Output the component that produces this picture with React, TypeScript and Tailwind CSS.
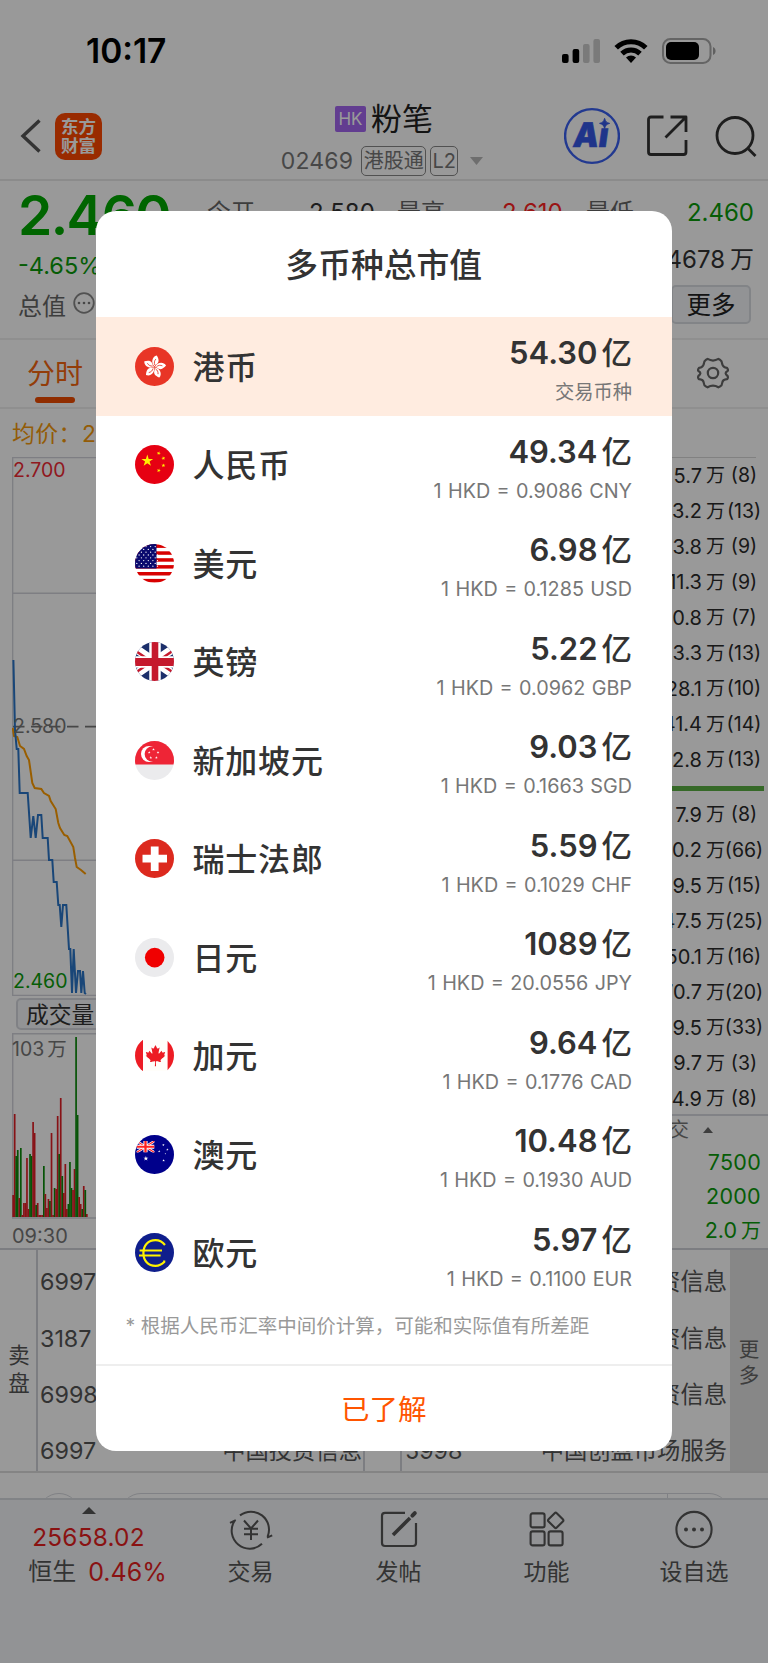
import type { ReactNode } from "react";
import { FaCanadianMapleLeaf } from "react-icons/fa";

type Currency = {
  name: string;
  amount: string;
  note: string;
  flag: ReactNode;
  active?: boolean;
};

const STAR = "M0 -1 L0.2245 -0.309 L0.951 -0.309 L0.363 0.118 L0.588 0.809 L0 0.382 L-0.588 0.809 L-0.363 0.118 L-0.951 -0.309 L-0.2245 -0.309 Z";

function Star({ x, y, r, rotate = 0, fill }: { x: number; y: number; r: number; rotate?: number; fill: string }) {
  return <path d={STAR} fill={fill} transform={`translate(${x} ${y}) rotate(${rotate}) scale(${r})`} />;
}

function Flag({ children }: { children: ReactNode }) {
  return (
    <svg viewBox="0 0 39 39" className="size-[39px] shrink-0 rounded-full">
      {children}
    </svg>
  );
}

function HongKong() {
  return (
    <Flag>
      <rect width="39" height="39" fill="#e83526" />
      <g transform="translate(19.5 20)">
        {[14, 86, 158, 230, 302].map((a) => (
          <g key={a} transform={`rotate(${a})`}>
            <path d="M0 -0.5 C-4.8 -3 -4.8 -9.6 -0.6 -11.6 C1.2 -9.8 3.8 -7 2 -4 C1.2 -2.6 0 -2.4 0 -0.5 Z" fill="#fff" />
            <path d="M-0.2 -2 C-1.6 -4 -1.6 -6 -0.6 -8" stroke="#e83526" strokeWidth="0.8" fill="none" />
          </g>
        ))}
      </g>
    </Flag>
  );
}

function China() {
  return (
    <Flag>
      <rect width="39" height="39" fill="#e60012" />
      <Star x={12.3} y={15.8} r={6.2} fill="#fff100" />
      <Star x={23.7} y={8.2} r={2.1} rotate={20} fill="#fff100" />
      <Star x={28.4} y={13.2} r={2.1} rotate={-15} fill="#fff100" />
      <Star x={28.4} y={20.5} r={2.1} fill="#fff100" />
      <Star x={23.7} y={25.5} r={2.1} rotate={20} fill="#fff100" />
    </Flag>
  );
}

function UnitedStates() {
  const dots = [];
  for (let row = 0; row < 8; row++) {
    for (let col = 0; col < 5; col++) {
      dots.push(<circle key={`${row}-${col}`} cx={1.8 + col * 4.6 + (row % 2) * 2.3} cy={2.6 + row * 2.8} r="0.65" fill="#fff" />);
    }
  }
  return (
    <Flag>
      <rect width="39" height="39" fill="#fff" />
      {[0, 6.9, 13.8, 20.7, 27.6, 34.5].map((y) => (
        <rect key={y} y={y + 0.4} width="39" height="3.5" fill="#d80000" />
      ))}
      <rect width="21.5" height="24.5" fill="#0a0a6e" />
      {dots}
    </Flag>
  );
}

function UnitedKingdom() {
  return (
    <Flag>
      <rect width="39" height="39" fill="#1c2f6b" />
      <path d="M-3 4 L42 35 M-3 35 L42 4" stroke="#fff" strokeWidth="8.5" />
      <path d="M0 8.5 L17 20 M39 31 L22 19.5 M0 31 L16 20 M39 8 L23 19" stroke="#c5192d" strokeWidth="2.6" />
      <path d="M20 0 V39 M0 20 H39" stroke="#fff" strokeWidth="11.5" />
      <path d="M20 0 V39" stroke="#c5192d" strokeWidth="6.6" />
      <path d="M0 20 H39" stroke="#c5192d" strokeWidth="7.8" />
    </Flag>
  );
}

function Singapore() {
  return (
    <Flag>
      <rect width="39" height="39" fill="#ebebed" />
      <rect width="39" height="23.5" fill="#ee2536" />
      <circle cx="14" cy="13" r="8" fill="#fff" />
      <circle cx="17" cy="13" r="7.4" fill="#ee2536" />
      <Star x={18.5} y={8.4} r={1.5} fill="#fff" />
      <Star x={23} y={11.4} r={1.5} fill="#fff" />
      <Star x={14.2} y={11.4} r={1.5} fill="#fff" />
      <Star x={21.4} y={16.6} r={1.5} fill="#fff" />
      <Star x={15.8} y={16.6} r={1.5} fill="#fff" />
    </Flag>
  );
}

function Switzerland() {
  return (
    <Flag>
      <rect width="39" height="39" fill="#dc291e" />
      <path d="M19.7 7.5 V32 M7.5 19.7 H32" stroke="#fff" strokeWidth="7.8" />
    </Flag>
  );
}

function Japan() {
  return (
    <Flag>
      <rect width="39" height="39" fill="#ebebed" />
      <circle cx="19.7" cy="19.6" r="9.8" fill="#f00000" />
    </Flag>
  );
}

function Canada() {
  return (
    <Flag>
      <rect y="4" width="39" height="31" fill="#fffefa" />
      <rect y="4" width="8" height="31" fill="#ed1c24" />
      <rect x="32.6" y="4" width="8" height="31" fill="#ed1c24" />
      <FaCanadianMapleLeaf x={9.8} y={9} size={21.4} color="#ed1c24" />
    </Flag>
  );
}

function Australia() {
  return (
    <Flag>
      <rect width="39" height="39" fill="#00008b" />
      <svg x="1.5" y="6" width="18" height="11.5" viewBox="0 0 39 26" preserveAspectRatio="none">
        <path d="M0 0 L39 26 M0 26 L39 0" stroke="#fff" strokeWidth="5.5" />
        <path d="M0 0 L39 26 M0 26 L39 0" stroke="#ff2020" strokeWidth="2.4" />
        <path d="M19.5 0 V26 M0 13 H39" stroke="#fff" strokeWidth="9" />
        <path d="M19.5 0 V26 M0 13 H39" stroke="#ff2020" strokeWidth="5" />
      </svg>
      <Star x={10.9} y={23.5} r={2.6} fill="#fff" />
      <Star x={28.4} y={10} r={1.3} fill="#fff" />
      <Star x={24.2} y={16.3} r={1.3} fill="#fff" />
      <Star x={32.4} y={14.6} r={1.3} fill="#fff" />
      <Star x={30.4} y={18.8} r={0.8} fill="#fff" />
      <Star x={28.6} y={25.4} r={1.4} fill="#fff" />
    </Flag>
  );
}

function Euro() {
  return (
    <Flag>
      <rect width="39" height="39" fill="#0f1e8c" />
      <path d="M30 12 C27 8.4 24 7.2 20.5 7.2 C13 7.2 8.4 12.5 8.4 20 C8.4 27.5 13 32.8 20.5 32.8 C24.5 32.8 27 31.3 29.2 29 V27.5" fill="none" stroke="#fff200" strokeWidth="2.2" />
      <path d="M4.6 17.5 H27 M4 22.4 H25.6" stroke="#fff200" strokeWidth="2" />
    </Flag>
  );
}

const currencies: Currency[] = [
  { name: "港币", amount: "54.30", note: "交易币种", flag: <HongKong />, active: true },
  { name: "人民币", amount: "49.34", note: "1 HKD = 0.9086 CNY", flag: <China /> },
  { name: "美元", amount: "6.98", note: "1 HKD = 0.1285 USD", flag: <UnitedStates /> },
  { name: "英镑", amount: "5.22", note: "1 HKD = 0.0962 GBP", flag: <UnitedKingdom /> },
  { name: "新加坡元", amount: "9.03", note: "1 HKD = 0.1663 SGD", flag: <Singapore /> },
  { name: "瑞士法郎", amount: "5.59", note: "1 HKD = 0.1029 CHF", flag: <Switzerland /> },
  { name: "日元", amount: "1089", note: "1 HKD = 20.0556 JPY", flag: <Japan /> },
  { name: "加元", amount: "9.64", note: "1 HKD = 0.1776 CAD", flag: <Canada /> },
  { name: "澳元", amount: "10.48", note: "1 HKD = 0.1930 AUD", flag: <Australia /> },
  { name: "欧元", amount: "5.97", note: "1 HKD = 0.1100 EUR", flag: <Euro /> },
];

const asks = [
  ["5.7", "8"],
  ["3.2", "13"],
  ["3.8", "9"],
  ["11.3", "9"],
  ["0.8", "7"],
  ["3.3", "13"],
  ["28.1", "10"],
  ["41.4", "14"],
  ["2.8", "13"],
];

const bids = [
  ["7.9", "8"],
  ["0.2", "66"],
  ["9.5", "15"],
  ["47.5", "25"],
  ["50.1", "16"],
  ["70.7", "20"],
  ["9.5", "33"],
  ["9.7", "3"],
  ["4.9", "8"],
];

const sellBrokers = [
  ["6997", ""],
  ["3187", ""],
  ["6998", ""],
  ["6997", "中国投资信息"],
];

const moreBrokers = [
  ["", "投资信息"],
  ["", "投资信息"],
  ["", "投资信息"],
  ["5998", "中国创盈市场服务"],
];

// bar height in px, positive = up (red), negative = down (green)
const volumes = [
  22, 103, -61, -67, 19, -69, 2, 14, 14, 59, 8, -63, -61, 95, 84, -12, 14, 2, 2, 2, -51, 23, 9, 18, -16, 84, 2, -29, 28, 101,
  -63, 119, -41, 24, 53, 8, -13, -55, -29, 27, 48, -180, -102, 20, 13, -8, 31, -27, 3,
];

function StatusBar() {
  return (
    <div className="flex h-24 items-center justify-between pt-[6px] pr-[52px] pl-[86px] text-black">
      <span className="pt-[2px] text-[33.5px] leading-none font-semibold">10:17</span>
      <div className="flex items-center gap-[14px]">
        <svg width="38" height="26" viewBox="0 0 38 26">
          <rect x="0" y="16" width="6.6" height="9" rx="2" fill="#000" />
          <rect x="10.6" y="11" width="6.6" height="14" rx="2" fill="#000" />
          <rect x="21" y="6" width="6.6" height="19" rx="2" fill="#cccccc" />
          <rect x="31.4" y="1" width="6.6" height="24" rx="2" fill="#cccccc" />
        </svg>
        <svg width="34" height="26" viewBox="0 0 34 26" fill="none" stroke="#000" strokeWidth="5">
          <path d="M2.2 9.8 A21 21 0 0 1 31.8 9.8" />
          <path d="M8 15.6 A13 13 0 0 1 26 15.6" />
          <path d="M17 25 L12 19.6 A7.2 7.2 0 0 1 22 19.6 Z" fill="#000" stroke="none" />
        </svg>
        <svg width="54" height="26" viewBox="0 0 54 26">
          <rect x="1" y="1" width="47.5" height="24" rx="7.5" fill="none" stroke="#a8a8a8" strokeWidth="2" />
          <rect x="4" y="4" width="33" height="18" rx="5" fill="#000" />
          <path d="M51 9 C54.4 10.2 54.4 15.8 51 17 Z" fill="#a0a0a0" />
        </svg>
      </div>
    </div>
  );
}

function NavBar() {
  return (
    <header className="grid h-[85px] grid-cols-[240px_1fr_240px] border-b-2 border-[#e8e8e8]">
      <div className="flex items-center gap-[14px] pb-[3px] pl-5">
        <svg width="21" height="34" viewBox="0 0 21 34" fill="none" stroke="#555" strokeWidth="3.4">
          <path d="M19.5 1.5 L3 17 L19.5 32.5" />
        </svg>
        <div className="flex size-[47px] flex-col items-center justify-center rounded-[10px] bg-[#ff4800] text-[17.5px] leading-[19.5px] font-bold text-white">
          <span>东方</span>
          <span>财富</span>
        </div>
      </div>
      <div className="flex flex-col items-center pt-[7px]">
        <div className="flex items-center gap-[5px]">
          <span className="flex h-[26px] w-[31px] items-center justify-center rounded-[2px] bg-[#a367f0] text-[17px] leading-none text-white">HK</span>
          <span className="text-[31px] leading-[32px] text-[#222]">粉笔</span>
        </div>
        <div className="mt-[11px] mr-[4px] flex items-center text-[23px] leading-none text-[#777]">
          <span className="mr-[8px] tracking-[0.2px]">02469</span>
          <span className="flex h-[30px] w-[65px] items-center justify-center rounded-[5px] border-[1.5px] border-[#888] text-[20px]">港股通</span>
          <span className="ml-[4px] flex h-[30px] w-[28px] items-center justify-center rounded-[5px] border-[1.5px] border-[#888] text-[20px]">L2</span>
          <svg width="13" height="8" viewBox="0 0 13 8" className="ml-[12px]">
            <path d="M0 0 H13 L6.5 8 Z" fill="#b8b8b8" />
          </svg>
        </div>
      </div>
      <div className="flex items-center pb-[4px] pl-[36px]">
        <svg width="56" height="58" viewBox="0 0 56 58">
          <circle cx="28" cy="29" r="26.9" fill="none" stroke="#3a60f0" strokeWidth="2.4" />
          <g transform="translate(17.5 0) skewX(-8)">
            <text x="-4" y="40" fontSize="34" fontWeight="900" fill="#3558e6" stroke="#3558e6" strokeWidth="0.6" textLength="35" lengthAdjust="spacingAndGlyphs">
              Aı
            </text>
          </g>
          <path d="M40.6 11.4 C41.6 14.8 42.4 15.6 45.6 16.4 C42.4 17.2 41.6 18 40.6 21.4 C39.6 18 38.8 17.2 35.6 16.4 C38.8 15.6 39.6 14.8 40.6 11.4 Z" fill="#3558e6" stroke="#3558e6" />
        </svg>
        <svg width="42" height="42" viewBox="0 0 42 42" className="ml-[26px]" fill="none" stroke="#333" strokeWidth="2.8" strokeLinejoin="round">
          <path d="M17.5 2 H5 Q2.5 2 2.5 4.5 V37 Q2.5 39.5 5 39.5 H37.5 Q40 39.5 40 37 V25" />
          <path d="M24.5 2 H40 V17 M39 3 L19.5 22.5" />
        </svg>
        <svg width="42" height="44" viewBox="0 0 42 44" className="ml-[27px]" fill="none" stroke="#333" strokeWidth="2.8">
          <circle cx="20" cy="21.5" r="18" />
          <path d="M32.5 34 L40.5 42" />
        </svg>
      </div>
    </header>
  );
}

function Quote() {
  return (
    <section className="flex h-[159px] justify-between border-b-2 border-[#efefef] pr-[14px] pl-[18px]">
      <div className="flex flex-col">
        <span className="mt-[6px] text-[55px] leading-[56px] font-semibold tracking-[-1.6px] text-[#00a800]">2.460</span>
        <span className="mt-[9px] text-[23.5px] leading-[28px] text-[#0a9b0a]">-4.65%</span>
        <div className="mt-[12px] flex items-center text-[24px] leading-[28px] text-[#666]">
          总值
          <svg width="22" height="22" viewBox="0 0 22 22" className="mb-[8px] ml-[7px]">
            <circle cx="11" cy="11" r="9.8" fill="none" stroke="#888" strokeWidth="1.8" />
            <circle cx="6" cy="11" r="1.3" fill="#777" />
            <circle cx="11" cy="11" r="1.3" fill="#777" />
            <circle cx="16" cy="11" r="1.3" fill="#777" />
          </svg>
        </div>
      </div>
      <div className="flex w-[547px] flex-col">
        <div className="mt-[18px] flex text-[24px] leading-[28px] text-[#666]">
          <span className="w-[102px]">今开</span>
          <span className="w-[88px] text-[#333]">2.580</span>
          <span className="w-[105px]">最高</span>
          <span className="w-[84px] text-[#f22]">2.610</span>
          <span>最低</span>
          <span className="ml-auto text-[#0a9b0a]">2.460</span>
        </div>
        <span className="mt-[19px] text-right text-[24px] leading-[28px] text-[#333]">
          4678<span className="ml-[5px]">万</span>
        </span>
        <div className="mt-[11px] mr-[3px] flex h-[39px] w-[80px] items-center justify-center self-end rounded-[5px] border-2 border-[#d9dce2] bg-[#f3f5f8] pt-[2px] text-[24.5px] leading-none text-[#222]">更多</div>
      </div>
    </section>
  );
}

function ChartTabs() {
  return (
    <div className="flex h-[69px] items-start justify-between border-b-2 border-[#efefef] pr-[38px] pl-[27px]">
      <div className="flex flex-col items-center pt-[19px]">
        <span className="text-[28px] leading-[31px] text-[#f5660f]">分时</span>
        <span className="mt-[7px] h-[6px] w-[40px] rounded-full bg-[#f04c00]" />
      </div>
      <svg width="34" height="34" viewBox="0 0 34 34" className="mt-[16px]" fill="none" stroke="#666" strokeWidth="2.2" strokeLinejoin="round">
        <path d="M11.6 2.9 Q17 6.2 22.4 2.9 L24 3.8 Q26 4.8 26.2 8 Q27 11.4 31 11.8 Q32.6 14 31.6 15 Q27.6 17 31.6 20 Q32.4 21.6 31.2 23.2 Q26.6 23.4 26.2 27 Q26 29.8 24 30.6 L22.4 31.3 Q17 28 11.6 31.3 L10 30.6 Q8 29.8 7.8 27 Q7.4 23.4 2.8 23.2 Q1.6 21.6 2.4 20 Q6.4 17 2.4 15 Q1.4 14 3 11.8 Q7 11.4 7.8 8 Q8 4.8 10 3.8 Z" />
        <circle cx="17" cy="17" r="5.2" />
      </svg>
    </div>
  );
}

function PriceChart() {
  return (
    <div className="relative h-[539px]">
      <svg width="88" height="539" viewBox="12 457 88 539" className="block" fill="none">
        <path d="M100 457.7 H12.7 V995.3 H100" stroke="#d2d3da" strokeWidth="1.3" />
        <path d="M12 593.2 H100 M12 860.3 H100" stroke="#d2d3da" strokeWidth="1.6" />
        <path d="M13 726.6 H100" stroke="#777" strokeWidth="1.6" strokeDasharray="11.5 6.5" />
        <path
          d="M12.7 728 L14 736 L17.3 737 L20 746 L24 749 L26.7 756 L29 760 L32.3 783 L34.7 788 L41.3 789 L44 793 L49 796 L50.7 801 L55.7 809 L58.3 823 L60 828 L64.3 835 L67.3 836 L73.3 847 L75 858 L76.7 867 L81 870 L85.7 874"
          stroke="#ff9d00"
          strokeWidth="2"
        />
        <path
          d="M13.4 660 L15 730 L16.7 749 H18.3 L19.7 793 H27.7 L30.7 838 L33.3 816 L35.7 838 L38 815 H41.3 L42.7 838 H47.7 L49 860 H52.3 L53.7 882 H56.7 L58.3 905 H59.7 L61.3 927 L63 905 H66.3 L69 949 H70.3 L72 993 L73.7 949 L76 993 L78 971 H80 L81.3 993 L83 971 L84.7 993 L86 994"
          stroke="#2a76c8"
          strokeWidth="2"
        />
      </svg>
      <span className="absolute top-[2px] left-px text-[19.5px] leading-[22px] text-[#f02a35]">2.700</span>
      <span className="absolute top-[258px] left-px text-[19.5px] leading-[22px] text-[#777]">2.580</span>
      <span className="absolute top-[513px] left-px text-[19.5px] leading-[22px] text-[#0a9b0a]">2.460</span>
    </div>
  );
}

function VolumeChart() {
  return (
    <div className="relative h-[186px]">
      <svg width="88" height="186" viewBox="0 0 88 186" className="block">
        <path d="M88 0.8 H0.7 V185 H88" fill="none" stroke="#d2d3da" strokeWidth="1.5" />
        {volumes.map((v, i) => (
          <rect key={i} x={0.3 + i * 1.535} y={184 - Math.abs(v)} width="1.7" height={Math.abs(v)} fill={v > 0 ? "#e21f26" : "#0b8a0b"} />
        ))}
      </svg>
      <span className="absolute top-[5px] left-0 text-[19.5px] leading-[22px] text-[#777]">
        103<span className="ml-[3px]">万</span>
      </span>
    </div>
  );
}

function DepthRow({ size, count }: { size: string; count: string }) {
  return (
    <div className="flex h-[35.5px] items-center justify-end text-[20px] leading-none text-[#2a2a2a]">
      <span>{size}</span>
      <span className="ml-[4px] text-[19px]">万</span>
      <span className="flex w-[38px] justify-center text-[19.5px]">({count})</span>
    </div>
  );
}

function DepthPanel() {
  return (
    <div className="flex w-[168px] flex-col">
      <div className="h-[49px] w-[156px] shrink-0 border-b-[1.5px] border-[#d8d8d8]" />
      <div className="pr-[5px]">
        {asks.map((row, i) => (
          <DepthRow key={i} size={row[0]} count={row[1]} />
        ))}
      </div>
      <div className="mt-[8px] mr-[4px] mb-[6.5px] h-[5px] shrink-0 bg-[#5aaf43]" />
      <div className="h-[316.5px] pr-[5px]">
        {bids.map((row, i) => (
          <DepthRow key={i} size={row[0]} count={row[1]} />
        ))}
      </div>
      <div className="flex flex-1 flex-col items-end border-t-2 border-[#d8d9df] pr-[7px] text-[21.5px] text-[#0a9b0a]">
        <div className="mt-px flex items-center gap-[14px] pr-[48px] leading-[26px] text-[#777]">
          <span className="text-[20px]">成交</span>
          <svg width="10" height="6" viewBox="0 0 10 6">
            <path d="M0 6 L5 0 L10 6 Z" fill="#666" />
          </svg>
        </div>
        <span className="mt-[2px] leading-[34px] tracking-[0.3px]">7500</span>
        <span className="leading-[34px] tracking-[0.3px]">2000</span>
        <span className="leading-[34px]">
          2.0<span className="ml-[4px] text-[20px]">万</span>
        </span>
      </div>
    </div>
  );
}

function ChartArea() {
  return (
    <section className="flex h-[841px] justify-between border-b-2 border-[#cfd0d8]">
      <div className="flex w-[100px] flex-col pl-[12px]">
        <span className="mt-[12px] h-[37px] text-[22.8px] leading-[26px] tracking-[0.5px] whitespace-nowrap text-[#f59a0c]">均价：2</span>
        <PriceChart />
        <div className="mt-[2px] ml-[4px] flex h-[32px] w-[92px] shrink-0 items-center rounded-[5px] border-2 border-[#d6d8de] bg-[#f3f5f8] pt-[2px] pl-[8px] text-[22.8px] leading-none whitespace-nowrap text-[#333]">成交量</div>
        <div className="mt-[3px]">
          <VolumeChart />
        </div>
        <span className="mt-[5px] text-[20px] leading-[24px] text-[#777]">09:30</span>
      </div>
      <DepthPanel />
    </section>
  );
}

function BrokerColumn({ rows }: { rows: string[][] }) {
  return (
    <div>
      {rows.map((row, i) => (
        <div key={i} className="flex h-[56.2px] items-center justify-between pr-px pl-[2px] leading-none">
          <span>{row[0]}</span>
          <span>{row[1]}</span>
        </div>
      ))}
    </div>
  );
}

function Brokers() {
  return (
    <section className="flex h-[223px] overflow-hidden border-b-2 border-[#dcdcdc] text-[23.3px] text-[#555]">
      <div className="flex w-[38px] flex-col items-center justify-center border-r-2 border-[#cfd0d8] pt-[16px] pl-[2px] text-[21.5px] leading-[28px]">
        <span>卖</span>
        <span>盘</span>
      </div>
      <div className="grid flex-1 grid-cols-[325px_39px_1fr] pt-[4px]">
        <BrokerColumn rows={sellBrokers} />
        <div className="h-[217px] border-x-2 border-[#cfd0d8]" />
        <div className="pr-[2px] pl-px">
          <BrokerColumn rows={moreBrokers} />
        </div>
      </div>
      <div className="flex w-[38px] flex-col items-center bg-[#e2e2e2] pt-[87px] text-[20.5px] leading-[26px] text-[#666]">
        <span>更</span>
        <span>多</span>
      </div>
    </section>
  );
}

function TabBar() {
  return (
    <nav className="flex flex-1 border-t-2 border-[#d8dae0] bg-[#f3f5f8] text-[23px] leading-[28px] text-[#555]">
      <div className="flex w-[177px] flex-col items-center pt-[7px]">
        <svg width="14" height="7" viewBox="0 0 14 7">
          <path d="M0 7 L7 0 L14 7 Z" fill="#555" />
        </svg>
        <span className="mt-[9px] text-[24.4px] tracking-[0.2px] text-[#e61f1f]">25658.02</span>
        <div className="mt-[7px] mr-[-18px] flex items-center gap-[12px]">
          <span className="text-[24px]">恒生</span>
          <span className="text-[25px] text-[#e61f1f]">0.46%</span>
        </div>
      </div>
      <div className="flex w-[147px] flex-col items-center pt-[10px]">
        <svg width="44" height="40" viewBox="0 0 44 40" fill="none" stroke="#555" strokeWidth="2">
          <path d="M11 5.4 A18 18 0 0 1 38.6 26.6 M38 27.6 L43.2 25.4 M33 33.8 A18 18 0 0 1 5.5 11 M1 12.8 L6.8 10.2" />
          <path d="M15 10.5 L22 18.5 L29 10.5 M22 18.5 V30 M15 18.8 H29 M15 24.2 H29" />
        </svg>
        <span className="mt-[8px]">交易</span>
      </div>
      <div className="flex w-[149px] flex-col items-center pt-[10px]">
        <svg width="38" height="40" viewBox="0 0 38 40" fill="none" stroke="#555" strokeWidth="2.2">
          <path d="M25 2.8 H5 Q2 2.8 2 5.8 V33 Q2 36 5 36 H33 Q36 36 36 33 V13" />
          <path d="M13 25 L30 8" strokeWidth="3.6" />
          <path d="M32.4 5.6 L34.8 3.2" strokeWidth="4" strokeLinecap="round" />
        </svg>
        <span className="mt-[8px]">发帖</span>
      </div>
      <div className="flex w-[147px] flex-col items-center pt-[10px]">
        <svg width="36" height="40" viewBox="0 0 36 40" fill="none" stroke="#555" strokeWidth="2.1">
          <rect x="1.6" y="3.4" width="14" height="14" rx="2" />
          <rect x="1.6" y="21.4" width="14" height="14" rx="2" />
          <rect x="19.6" y="21.4" width="14" height="14" rx="2" />
          <rect x="20.9" y="4.6" width="11.6" height="11.6" rx="1.5" transform="rotate(45 26.7 10.4)" />
        </svg>
        <span className="mt-[8px]">功能</span>
      </div>
      <div className="flex flex-1 flex-col items-center pt-[10px]">
        <svg width="40" height="40" viewBox="0 0 40 40">
          <circle cx="20" cy="19.5" r="17.6" fill="none" stroke="#555" strokeWidth="2.1" />
          <circle cx="12" cy="19.5" r="2" fill="#555" />
          <circle cx="20" cy="19.5" r="2" fill="#555" />
          <circle cx="28" cy="19.5" r="2" fill="#555" />
        </svg>
        <span className="mt-[8px]">设自选</span>
      </div>
    </nav>
  );
}

function CurrencyRow({ item }: { item: Currency }) {
  return (
    <li className={`flex h-[98.5px] items-center justify-between pr-[40px] pl-[39px] ${item.active ? "bg-[#ffece0]" : ""}`}>
      <div className="flex items-center gap-[19px]">
        {item.flag}
        <span className="pt-[3px] text-[32px] leading-none font-medium tracking-[0.8px] text-[#333]">{item.name}</span>
      </div>
      <div className="flex flex-col items-end pt-[10px]">
        <span className="text-[31px] leading-[36px] font-semibold text-[#333]">
          {item.amount}
          <span className="ml-[4px] text-[30.5px] font-medium">亿</span>
        </span>
        <span className={`mt-[6px] leading-[30px] text-[#777] ${item.active ? "text-[19.3px]" : "text-[19.8px] [word-spacing:0.8px]"}`}>{item.note}</span>
      </div>
    </li>
  );
}

function CurrencyDialog() {
  return (
    <div role="dialog" className="absolute top-[211px] left-[95.5px] flex h-[1240px] w-[576.5px] flex-col overflow-hidden rounded-[20px] bg-white">
      <h2 className="flex h-[106px] items-center justify-center pt-[3px] text-[32.8px] leading-none font-medium text-[#333]">多币种总市值</h2>
      <ul>
        {currencies.map((item) => (
          <CurrencyRow key={item.name} item={item} />
        ))}
      </ul>
      <p className="pt-[11px] pl-[30px] text-[19.5px] leading-[26px] whitespace-nowrap text-[#999]">* 根据人民币汇率中间价计算，可能和实际值有所差距</p>
      <button type="button" className="mt-auto h-[87px] border-t-2 border-[#eee] pt-[3px] text-[28.5px] leading-none text-[#ff5500]">
        已了解
      </button>
    </div>
  );
}

export default function App() {
  return (
    <div className="relative h-[1663px] w-[768px] overflow-hidden bg-white font-['Inter','Noto_Sans_CJK_SC',sans-serif]">
      <div className="flex h-full flex-col">
        <StatusBar />
        <NavBar />
        <Quote />
        <ChartTabs />
        <ChartArea />
        <Brokers />
        {/* top edge of the comment box, mostly hidden by the tab bar */}
        <div className="flex h-[25px] items-start gap-[40px] overflow-hidden px-[38px] pt-[20px]">
          <div className="size-[42px] shrink-0 rounded-full border-[1.5px] border-[#d6d8de]" />
          <div className="flex h-[42px] flex-1 justify-end rounded-full border-[1.5px] border-[#d6d8de]">
            <div className="w-[62px] border-l-[1.5px] border-[#d6d8de]" />
          </div>
        </div>
        <TabBar />
      </div>
      <div className="absolute inset-0 bg-black/40" />
      <CurrencyDialog />
    </div>
  );
}
